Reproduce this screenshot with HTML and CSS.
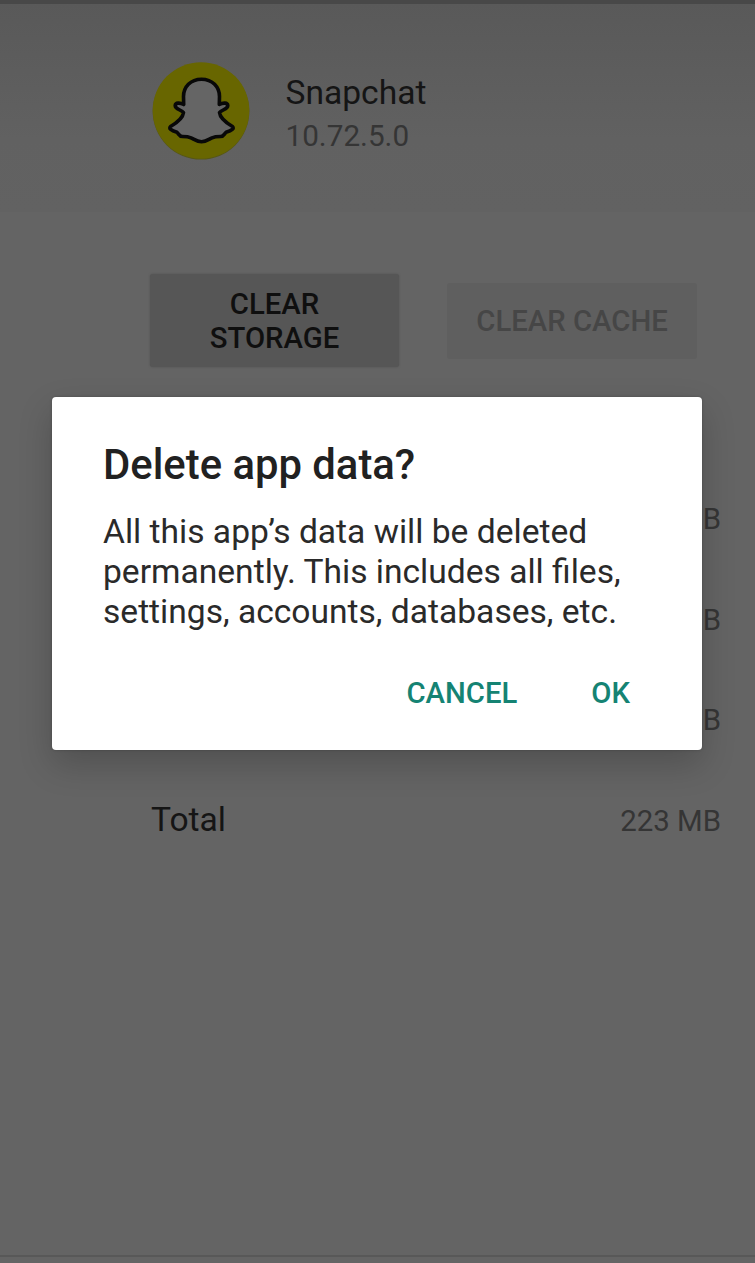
FILE: index.html
```
<!DOCTYPE html>
<html lang="en">
<head>
    <meta charset="UTF-8">
    <meta name="viewport" content="width=device-width, initial-scale=1.0">
    <title>Storage</title>
    <link rel="stylesheet" href="styles.css">
</head>
<body>
    <div class="screen">
        <div class="app-header">
            <svg class="app-icon" viewBox="0 0 100 102">
                <circle cx="50" cy="50.3" r="48.3" fill="#565618"/>
                <circle cx="50" cy="49.5" r="48.3" fill="#686600"/>
                <path d="M50.500 18.200 C61.500 18.200 68.500 26 68.500 35.500 L68.300 43.500 C72 41.500 76.500 41.500 76.800 44.500 C77 48 70.500 49 68.500 51.500 C69 56.500 75.500 62 81.500 65.500 C83.500 67.500 81 69.500 75 71.300 C73 73 73 75.500 69.500 75.500 C66 75.500 64 75.500 61 76.800 C57.500 78.500 55 80.800 50.500 80.800 C46 80.800 43.500 78.500 40 76.800 C37 75.500 35 75.500 31.500 75.500 C28 75.500 28 73 26 71.300 C20 69.500 17.500 67.500 19.500 65.500 C25.500 62 32 56.500 32.500 51.500 C30.500 49 24 48 24.200 44.500 C24.500 41.500 29 41.500 32.700 43.500 L32.500 35.500 C32.500 26 39.500 18.200 50.500 18.200 Z" fill="#656565" stroke="#080808" stroke-width="3.600" stroke-linejoin="round"/>
            </svg>
            <div class="app-info">
                <div class="app-name">Snapchat</div>
                <div class="app-version">10.72.5.0</div>
            </div>
        </div>
        <div class="actions">
            <button class="clear-storage">CLEAR<br>STORAGE</button>
            <button class="clear-cache" disabled>CLEAR CACHE</button>
        </div>
        <div class="sizes">
            <div class="row"><span class="size">B</span></div>
            <div class="row"><span class="size">B</span></div>
            <div class="row"><span class="size">B</span></div>
            <div class="row"><span class="label">Total</span><span class="size">223 MB</span></div>
        </div>
        <div class="bottom-line"></div>
    </div>
    <div class="dialog">
        <h1>Delete app data?</h1>
        <p>All this app’s data will be deleted<br>permanently. This includes all files,<br>settings, accounts, databases, etc.</p>
        <div class="dialog-buttons">
            <button>CANCEL</button>
            <button>OK</button>
        </div>
    </div>
</body>
</html>
```
FILE: styles.css
```
* {
    box-sizing: border-box;
}
body {
    margin: 0;
    position: relative;
    font-family: Roboto, sans-serif;
}
button {
    font-family: inherit;
    font-weight: 500;
    border: none;
    padding: 0;
    white-space: nowrap;
}
.screen {
    display: flex;
    flex-direction: column;
    height: 1263px;
    background: #646464;
    overflow: hidden;
}
.app-header {
    display: flex;
    height: 212px;
    padding: 57px 0 0 151px;
    border-top: 4px solid #484848;
    background: linear-gradient(#595959, #616161 65%, #626262);
}
.app-icon {
    width: 100px;
    height: 102px;
}
.app-info {
    margin-left: 34.5px;
    padding-top: 11px;
}
.app-name {
    font-size: 33.6px;
    line-height: 42px;
    color: #151515;
}
.app-version {
    font-size: 29.7px;
    line-height: 43px;
    color: #353535;
}
.actions {
    display: flex;
    align-items: center;
    gap: 48px;
    padding: 62px 0 0 150px;
}
.clear-storage {
    width: 249px;
    height: 93px;
    padding-top: 1px;
    border-radius: 3px;
    background: #565656;
    box-shadow: 0 0 2px #505050;
    color: #0f0f0f;
    font-size: 29.3px;
    line-height: 34px;
}
.clear-cache {
    width: 250px;
    height: 76px;
    border-radius: 3px;
    background: #5f5f5f;
    color: #464646;
    font-size: 29.3px;
}
.sizes {
    padding: 102px 34px 0 151px;
}
.row {
    display: flex;
    justify-content: space-between;
    align-items: center;
    height: 100.5px;
}
.label {
    padding-bottom: 2px;
    font-size: 33.6px;
    color: #151515;
}
.size {
    margin-left: auto;
    font-size: 29.4px;
    color: #353535;
}
.bottom-line {
    height: 2px;
    margin: auto 0 6px;
    background: #585858;
}
.dialog {
    position: absolute;
    top: 397px;
    left: 52px;
    width: 650px;
    height: 353px;
    padding: 43px 51px 0;
    border-radius: 4px;
    background: #fff;
    box-shadow: 0 14px 34px rgba(0, 0, 0, 0.2), 0 0 3px rgba(0, 0, 0, 0.2);
}
.dialog h1 {
    margin: 0;
    font-size: 41.8px;
    font-weight: 500;
    line-height: 50px;
    color: #212121;
    white-space: nowrap;
}
.dialog p {
    margin: 22px 0 0;
    font-size: 33.6px;
    line-height: 40px;
    color: #2a2a2a;
    white-space: nowrap;
}
.dialog-buttons {
    display: flex;
    justify-content: flex-end;
    gap: 74px;
    margin: 41px 21px 0 0;
}
.dialog-buttons button {
    background: none;
    color: #158373;
    font-size: 29.3px;
    line-height: 40px;
}
```
